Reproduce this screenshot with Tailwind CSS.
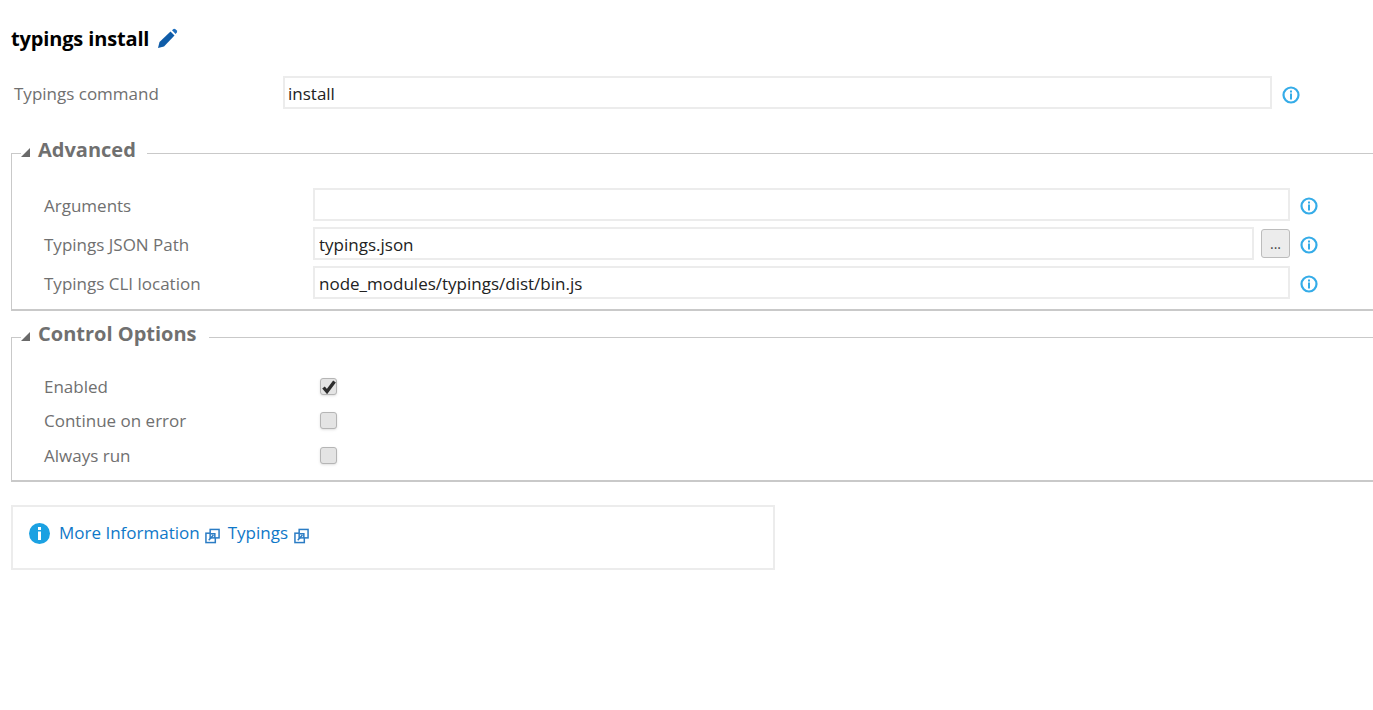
<!DOCTYPE html>
<html lang="en">
<head>
    <meta charset="UTF-8">
    <meta name="viewport" content="width=device-width, initial-scale=1.0">
    <title>typings install</title>
    <script src="https://cdn.jsdelivr.net/npm/@tailwindcss/browser@4"></script>
</head>
<body class="bg-white h-[710px] overflow-hidden font-['Open_Sans','Noto_Sans',sans-serif] text-[17px] text-[#707070]">
    <div class="pl-[11px] pt-[24px]">
        <!-- title -->
        <div class="flex items-center h-[28px]">
            <h1 class="pt-[1px] text-[20px] font-bold text-black tracking-[-0.15px]">typings install</h1>
            <svg class="ml-[8px] w-[21px] h-[21px]" viewBox="0 0 21 21">
                <path d="M1 20 L2.5 14 L13.5 3.5 L17.5 7.5 L7 18.5 Z" fill="#0f5ca8"/>
                <path d="M15 2.3 L16.5 1 Q17.5 0.5 18.5 1.3 L19.8 2.6 Q20.5 3.5 19.8 4.6 L18.6 6 Z" fill="#1f6fbe"/>
            </svg>
        </div>

        <!-- command -->
        <div class="flex items-center mt-[24px] h-[33px]">
            <label class="w-[272px] pl-[3px] pt-[2px]">Typings command</label>
            <input value="install" class="w-[989px] h-[33px] border-2 border-[#ececec] pl-[3px] pt-[2px] text-[#222] outline-none">
            <svg class="ml-[10px] mt-[4px] w-[18px] h-[18px]" viewBox="0 0 18 18">
                <circle cx="9" cy="9" r="7.5" fill="none" stroke="#35ace8" stroke-width="2.2"/>
                <rect x="8" y="4.5" width="2" height="2" fill="#35ace8"/>
                <rect x="8" y="7.5" width="2" height="6" fill="#35ace8"/>
            </svg>
        </div>

        <!-- advanced -->
        <fieldset class="border border-[#c9c9c9] border-b-2 border-r-0 mt-[29px] h-[173px]">
            <legend class="ml-[9px] pr-[11px] bg-white flex items-center h-[30px]">
                <svg class="w-[9px] h-[9px] mb-[1px]" viewBox="0 0 9 9"><path d="M9 0 V9 H0 Z" fill="#6a6a6a"/></svg>
                <span class="ml-[8px] mb-[7px] text-[20px] font-bold">Advanced</span>
            </legend>
            <div class="flex flex-col gap-[6px] mt-[20px] pl-[32px]">
                <div class="flex items-center h-[33px]">
                    <label class="w-[269px] pt-[2px]">Arguments</label>
                    <input class="w-[977px] h-[33px] border-2 border-[#ececec] pl-[4px] pt-[2px] text-[#222] outline-none">
                    <svg class="ml-[10px] mt-[3px] w-[18px] h-[18px]" viewBox="0 0 18 18">
                        <circle cx="9" cy="9" r="7.5" fill="none" stroke="#35ace8" stroke-width="2.2"/>
                        <rect x="8" y="4.5" width="2" height="2" fill="#35ace8"/>
                        <rect x="8" y="7.5" width="2" height="6" fill="#35ace8"/>
                    </svg>
                </div>
                <div class="flex items-center h-[33px]">
                    <label class="w-[269px] pt-[2px]">Typings JSON Path</label>
                    <input value="typings.json" class="w-[941px] h-[33px] border-2 border-[#ececec] pl-[4px] pt-[2px] text-[#222] outline-none">
                    <button class="ml-[7px] w-[29px] h-[29px] rounded-[3px] bg-[#ececec] border border-[#bcbcbc] text-[14px] leading-none text-[#444]">...</button>
                    <svg class="ml-[10px] mt-[3px] w-[18px] h-[18px]" viewBox="0 0 18 18">
                        <circle cx="9" cy="9" r="7.5" fill="none" stroke="#35ace8" stroke-width="2.2"/>
                        <rect x="8" y="4.5" width="2" height="2" fill="#35ace8"/>
                        <rect x="8" y="7.5" width="2" height="6" fill="#35ace8"/>
                    </svg>
                </div>
                <div class="flex items-center h-[33px]">
                    <label class="w-[269px] pt-[2px]">Typings CLI location</label>
                    <input value="node_modules/typings/dist/bin.js" class="w-[977px] h-[33px] border-2 border-[#ececec] pl-[4px] pt-[2px] text-[#222] outline-none">
                    <svg class="ml-[10px] mt-[3px] w-[18px] h-[18px]" viewBox="0 0 18 18">
                        <circle cx="9" cy="9" r="7.5" fill="none" stroke="#35ace8" stroke-width="2.2"/>
                        <rect x="8" y="4.5" width="2" height="2" fill="#35ace8"/>
                        <rect x="8" y="7.5" width="2" height="6" fill="#35ace8"/>
                    </svg>
                </div>
            </div>
        </fieldset>

        <!-- control options -->
        <fieldset class="border border-[#c9c9c9] border-b-2 border-r-0 mt-[11px] h-[160px]">
            <legend class="ml-[9px] pr-[12px] bg-white flex items-center h-[30px]">
                <svg class="w-[9px] h-[9px] mb-[1px]" viewBox="0 0 9 9"><path d="M9 0 V9 H0 Z" fill="#6a6a6a"/></svg>
                <span class="ml-[8px] mb-[7px] text-[20px] font-bold">Control Options</span>
            </legend>
            <div class="flex flex-col mt-[18px] pl-[32px]">
                <div class="flex items-center h-[34px]">
                    <label class="w-[276px]">Enabled</label>
                    <span class="flex items-center justify-center w-[17px] h-[17px] mb-[1px] rounded-[3px] bg-[#e4e4e4] border border-[#b5b5b5] shadow-sm">
                        <svg class="w-[14px] h-[14px]" viewBox="0 0 14 14"><path d="M1.5 7.5 L5 11.5 L12.5 1.5" fill="none" stroke="#2e2e2e" stroke-width="3.4"/></svg>
                    </span>
                </div>
                <div class="flex items-center h-[34px]">
                    <label class="w-[276px]">Continue on error</label>
                    <span class="w-[17px] h-[17px] mb-[1px] rounded-[3px] bg-[#e4e4e4] border border-[#b5b5b5] shadow-sm"></span>
                </div>
                <div class="flex items-center h-[35px]">
                    <label class="w-[276px]">Always run</label>
                    <span class="w-[17px] h-[17px] mb-[1px] rounded-[3px] bg-[#e4e4e4] border border-[#b5b5b5] shadow-sm"></span>
                </div>
            </div>
        </fieldset>

        <!-- info box -->
        <div class="mt-[23px] w-[764px] h-[65px] border-2 border-[#ececec] flex items-start pl-[16px] pt-[16px] text-[#0f78c8]">
            <svg class="w-[21px] h-[21px]" viewBox="0 0 21 21">
                <circle cx="10.5" cy="10.5" r="10.5" fill="#1ba1e2"/>
                <rect x="9" y="4" width="3" height="3" fill="#fff"/>
                <rect x="9" y="8.5" width="3" height="8.5" fill="#fff"/>
            </svg>
            <a class="ml-[9px] leading-[19px]">More Information</a>
            <svg class="ml-[5px] mt-[5px] w-[15px] h-[16px]" viewBox="0 0 16 16">
                <rect x="1" y="5" width="10" height="10" fill="#fff" stroke="#2b7cc4" stroke-width="1.6"/>
                <rect x="5.5" y="1" width="9.5" height="9" fill="#fff" stroke="#2b7cc4" stroke-width="1.6"/>
                <path d="M4 12.5 L9 7 M6 5.5 H10.5 V10" fill="none" stroke="#2b7cc4" stroke-width="1.6"/>
            </svg>
            <a class="ml-[8px] leading-[19px]">Typings</a>
            <svg class="ml-[6px] mt-[5px] w-[15px] h-[16px]" viewBox="0 0 16 16">
                <rect x="1" y="5" width="10" height="10" fill="#fff" stroke="#2b7cc4" stroke-width="1.6"/>
                <rect x="5.5" y="1" width="9.5" height="9" fill="#fff" stroke="#2b7cc4" stroke-width="1.6"/>
                <path d="M4 12.5 L9 7 M6 5.5 H10.5 V10" fill="none" stroke="#2b7cc4" stroke-width="1.6"/>
            </svg>
        </div>
    </div>
</body>
</html>
